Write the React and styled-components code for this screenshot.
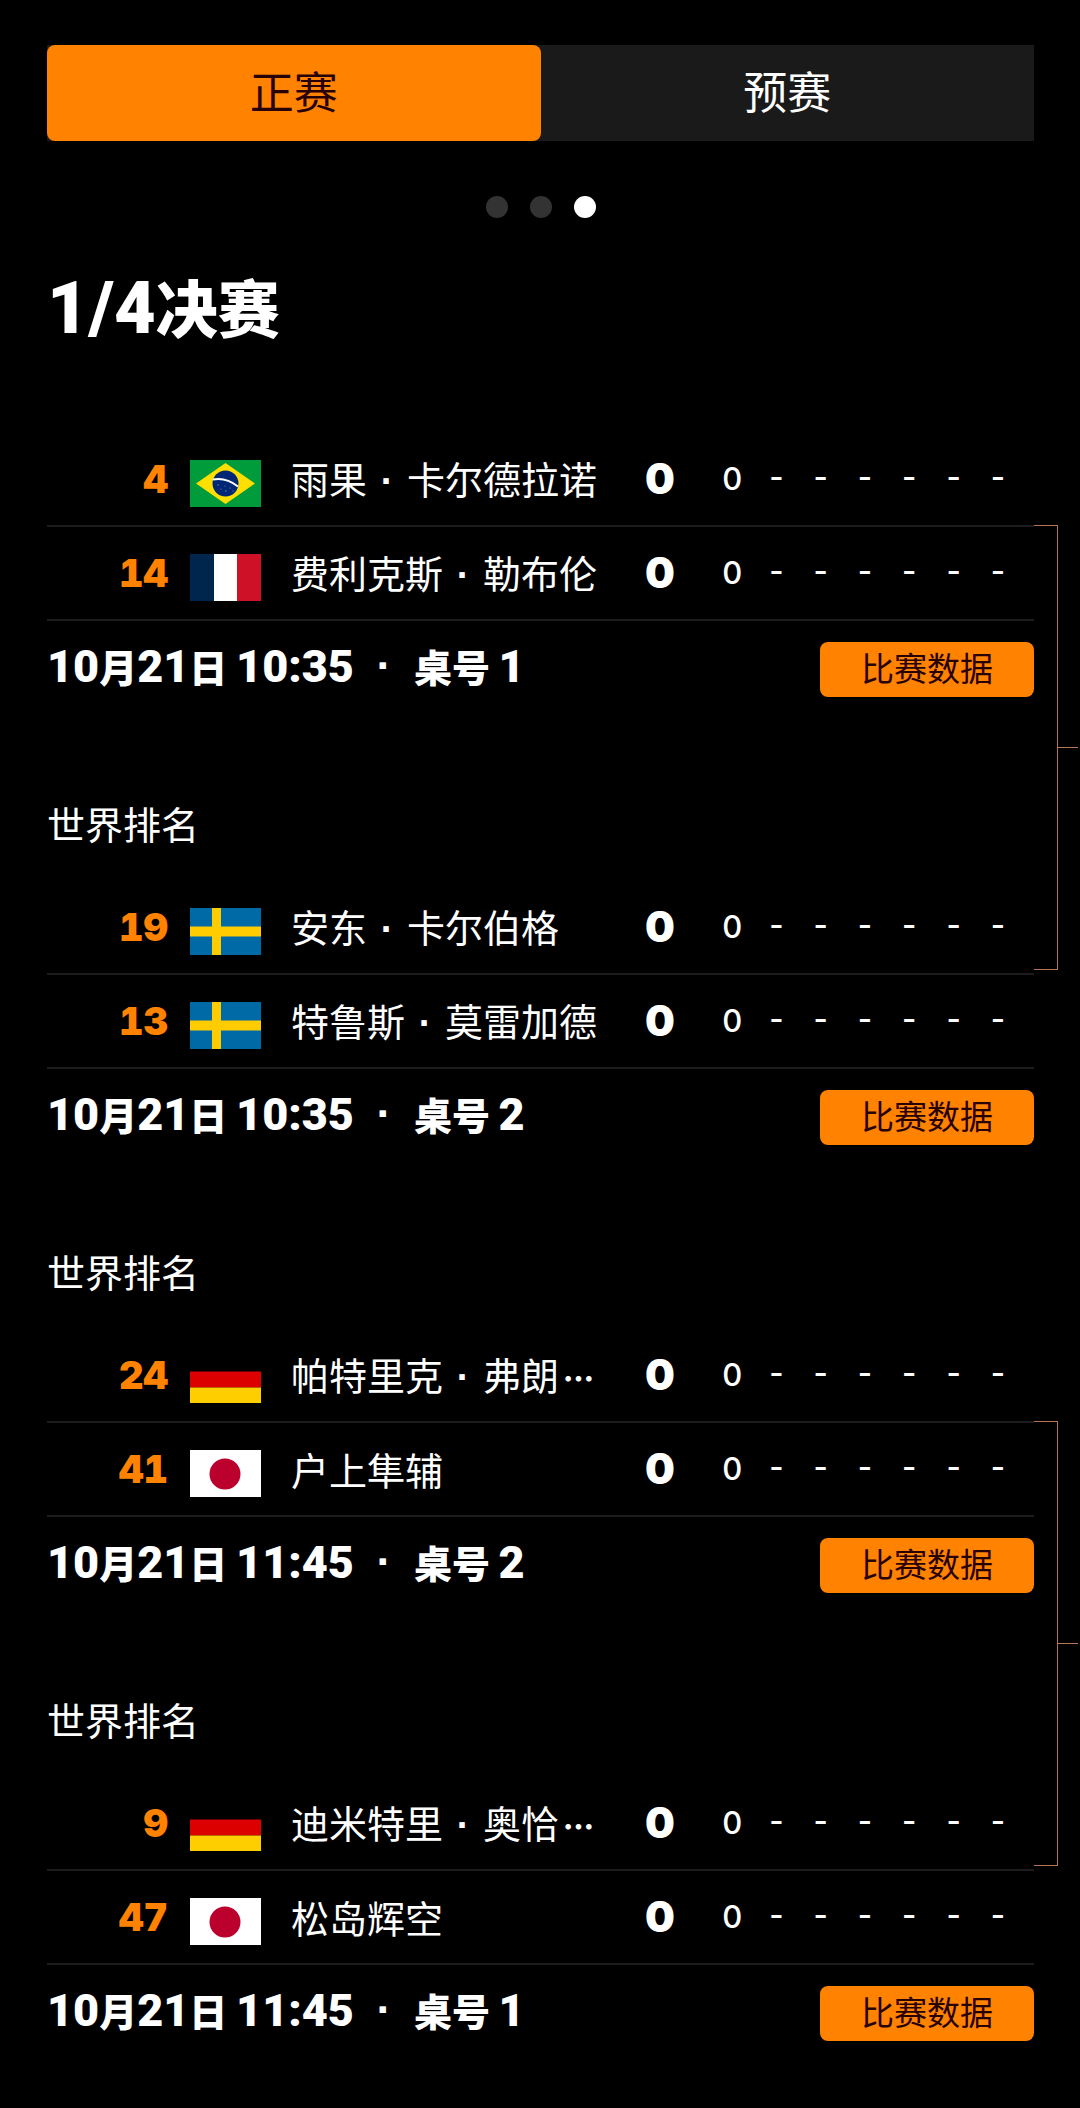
import React, { useState } from 'react';
import styled, { createGlobalStyle } from 'styled-components';

const ORANGE = '#ff8200';
const DARK = '#280008';
const LINE = '#1c1c1c';
const BRACKET = '#b87355';

const GlobalStyle = createGlobalStyle`
    * {
        box-sizing: border-box;
    }

    body {
        margin: 0;
        background: #000;
        color: #fff;
        font-family: 'Noto Sans CJK SC', sans-serif;
    }
`;

const Page = styled.main`
    padding: 45px 0 64px 47px;
`;

const TabBar = styled.div`
    display: flex;
    height: 96px;
    margin-right: 46px;
    background: #1a1a1a;
`;

const Tab = styled.button`
    flex: 1;
    padding: 0 0 6px;
    border: none;
    border-radius: 8px;
    background: ${(props) => (props.$active ? ORANGE : 'transparent')};
    color: ${(props) => (props.$active ? DARK : '#fff')};
    font-family: inherit;
    font-size: 44px;
    line-height: 64px;
    cursor: pointer;
`;

const Dots = styled.div`
    display: flex;
    justify-content: center;
    gap: 22px;
    margin: 55px 46px 0 0;
`;

const Dot = styled.button`
    width: 22px;
    height: 22px;
    padding: 0;
    border: none;
    border-radius: 50%;
    background: ${(props) => (props.$active ? '#fff' : '#333')};
    cursor: pointer;
`;

const Title = styled.h1`
    margin: 50px 0 86px;
    font-family: Roboto, 'Noto Sans CJK SC', sans-serif;
    font-size: 72px;
    font-weight: 900;
    line-height: 76px;
`;

const TitleHan = styled.span`
    font-family: 'Noto Sans CJK SC', sans-serif;
    font-size: 62px;
    font-weight: 900;
`;

const Label = styled.h2`
    margin: 0 0 30px;
    font-size: 38px;
    font-weight: 400;
    line-height: 56px;
`;

const Pair = styled.section`
    display: grid;
    grid-template-columns: 1fr 46px;
`;

const Bracket = styled.div`
    display: grid;
    grid-template-columns: 24px 20px;
    height: 445px;
    margin-top: 92px;
`;

const BracketArm = styled.div`
    border: 1px solid ${BRACKET};
    border-left: none;
`;

const BracketStem = styled.div`
    height: 50%;
    border-bottom: 1px solid ${BRACKET};
`;

const Row = styled.div`
    display: grid;
    grid-template-columns: 121px 71px 1fr 56px 310px;
    column-gap: 22px;
    align-items: center;
    height: 94px;
    padding-right: 14px;
    border-bottom: 2px solid ${LINE};
`;

const Rank = styled.span`
    color: ${ORANGE};
    font-family: Inter, sans-serif;
    font-size: 38px;
    font-weight: 900;
    font-variant-numeric: tabular-nums;
    line-height: 48px;
    text-align: right;
`;

const FlagBox = styled.svg`
    display: block;
    align-self: end;
    width: 71px;
    height: 47px;
    margin-bottom: 18px;
`;

const Name = styled.span`
    margin-left: 8px;
    font-size: 38px;
    line-height: 56px;
    white-space: nowrap;
`;

const MidDot = styled.span`
    display: inline-block;
    width: 40px;
    font-family: 'Liberation Sans', sans-serif;
    font-weight: 700;
    text-align: center;
`;

const Ellipsis = styled.span`
    margin-left: 4px;
    font-size: 31px;
    font-weight: 900;
    line-height: 48px;
`;

const Score = styled.strong`
    font-family: Inter, sans-serif;
    font-size: 42px;
    font-weight: 900;
    line-height: 48px;
    text-align: center;
`;

const Sets = styled.div`
    display: grid;
    grid-template-columns: repeat(7, 1fr);
    font-family: Inter, sans-serif;
    font-size: 31px;
    font-weight: 500;
    font-feature-settings: 'case';
    line-height: 48px;
    text-align: center;
`;

const Footer = styled.div`
    display: flex;
    justify-content: space-between;
    align-items: flex-start;
    padding-top: 21px;
`;

const Schedule = styled.div`
    display: flex;
    font-family: Roboto, 'Noto Sans CJK SC', sans-serif;
    font-size: 45px;
    font-weight: 900;
    line-height: 48px;
`;

const ScheduleHan = styled.span`
    font-family: 'Noto Sans CJK SC', sans-serif;
    font-size: 38px;
    font-weight: 900;
    line-height: 48px;
`;

const ScheduleDot = styled.span`
    width: 60px;
    font-family: 'Liberation Sans', sans-serif;
    text-align: center;
`;

const DataButton = styled.button`
    width: 214px;
    height: 55px;
    padding: 0 0 6px;
    border: none;
    border-radius: 8px;
    background: ${ORANGE};
    color: ${DARK};
    font-family: inherit;
    font-size: 33px;
    line-height: 48px;
    cursor: pointer;
`;

const Gap = styled.div`
    height: 98px;
`;

const flags = {
    br: (
        <>
            <rect width="71" height="47" fill="#009b3a" />
            <path d="M35.5 3 65 23.500 35.500 44 6 23.500z" fill="#fedf00" />
            <circle cx="35.500" cy="23.500" r="13" fill="#002776" />
            <path d="M23 19.500Q36 17 48 26.500" fill="none" stroke="#fff" strokeWidth="2" />
            <g fill="#7f93bb">
                <circle cx="28" cy="25" r="0.700" />
                <circle cx="31" cy="29" r="0.600" />
                <circle cx="36" cy="31" r="0.700" />
                <circle cx="40" cy="28" r="0.600" />
                <circle cx="35" cy="26" r="0.500" />
                <circle cx="43" cy="31" r="0.600" />
            </g>
        </>
    ),
    fr: (
        <>
            <rect width="71" height="47" fill="#fff" />
            <rect width="24" height="47" fill="#00264d" />
            <rect x="47" width="24" height="47" fill="#ce1126" />
        </>
    ),
    se: (
        <>
            <rect width="71" height="47" fill="#006aa7" />
            <rect x="22" width="9" height="47" fill="#fecc00" />
            <rect y="18.500" width="71" height="10" fill="#fecc00" />
        </>
    ),
    de: (
        <>
            <rect width="71" height="47" fill="#000" />
            <rect y="15.500" width="71" height="16" fill="#dd0000" />
            <rect y="31.500" width="71" height="15.500" fill="#ffce00" />
        </>
    ),
    jp: (
        <>
            <rect width="71" height="47" fill="#fff" />
            <circle cx="35" cy="24" r="15.500" fill="#bc002d" />
        </>
    )
};

const pairs = [
    [
        {
            date: ['10', '21', '10:35'],
            table: 1,
            players: [
                { rank: 4, flag: 'br', name: ['雨果', '卡尔德拉诺'] },
                { rank: 14, flag: 'fr', name: ['费利克斯', '勒布伦'] }
            ]
        },
        {
            date: ['10', '21', '10:35'],
            table: 2,
            players: [
                { rank: 19, flag: 'se', name: ['安东', '卡尔伯格'] },
                { rank: 13, flag: 'se', name: ['特鲁斯', '莫雷加德'] }
            ]
        }
    ],
    [
        {
            date: ['10', '21', '11:45'],
            table: 2,
            players: [
                { rank: 24, flag: 'de', name: ['帕特里克', '弗朗'], cut: true },
                { rank: 41, flag: 'jp', name: ['户上隼辅'] }
            ]
        },
        {
            date: ['10', '21', '11:45'],
            table: 1,
            players: [
                { rank: 9, flag: 'de', name: ['迪米特里', '奥恰'], cut: true },
                { rank: 47, flag: 'jp', name: ['松岛辉空'] }
            ]
        }
    ]
];

const sets = ['0', '-', '-', '-', '-', '-', '-'];

const Player = ({ player }) => (
    <Row>
        <Rank>{player.rank}</Rank>
        <FlagBox viewBox="0 0 71 47" aria-hidden="true">{flags[player.flag]}</FlagBox>
        <Name>
            {player.name[0]}
            {player.name[1] && <MidDot>·</MidDot>}
            {player.name[1]}
            {player.cut && <Ellipsis>…</Ellipsis>}
        </Name>
        <Score>0</Score>
        <Sets>
            {sets.map((set, index) => (
                <span key={index}>{set}</span>
            ))}
        </Sets>
    </Row>
);

const Match = ({ match }) => {
    const [month, day, time] = match.date;

    return (
        <article>
            {match.players.map((player) => (
                <Player key={player.rank} player={player} />
            ))}
            <Footer>
                <Schedule>
                    <span>
                        {month}<ScheduleHan>月</ScheduleHan>{day}<ScheduleHan>日 </ScheduleHan>{time}
                    </span>
                    <ScheduleDot>·</ScheduleDot>
                    <span>
                        <ScheduleHan>桌号 </ScheduleHan>{match.table}
                    </span>
                </Schedule>
                <DataButton type="button">比赛数据</DataButton>
            </Footer>
        </article>
    );
};

const App = () => {
    const [tab, setTab] = useState('正赛');
    const [page, setPage] = useState(2);

    return (
        <>
            <GlobalStyle />
            <Page>
                <TabBar>
                    {['正赛', '预赛'].map((name) => (
                        <Tab key={name} type="button" $active={tab === name} onClick={() => setTab(name)}>
                            {name}
                        </Tab>
                    ))}
                </TabBar>
                <Dots>
                    {[0, 1, 2].map((index) => (
                        <Dot
                            key={index}
                            type="button"
                            aria-label={`${index + 1}`}
                            $active={page === index}
                            onClick={() => setPage(index)}
                        />
                    ))}
                </Dots>
                <Title>1/4<TitleHan>决赛</TitleHan></Title>
                {pairs.map(([first, second], index) => (
                    <React.Fragment key={index}>
                        {index > 0 && (
                            <>
                                <Gap />
                                <Label>世界排名</Label>
                            </>
                        )}
                        <Pair>
                            <div>
                                <Match match={first} />
                                <Gap />
                                <Label>世界排名</Label>
                                <Match match={second} />
                            </div>
                            <Bracket>
                                <BracketArm />
                                <BracketStem />
                            </Bracket>
                        </Pair>
                    </React.Fragment>
                ))}
            </Page>
        </>
    );
};

export default App;
